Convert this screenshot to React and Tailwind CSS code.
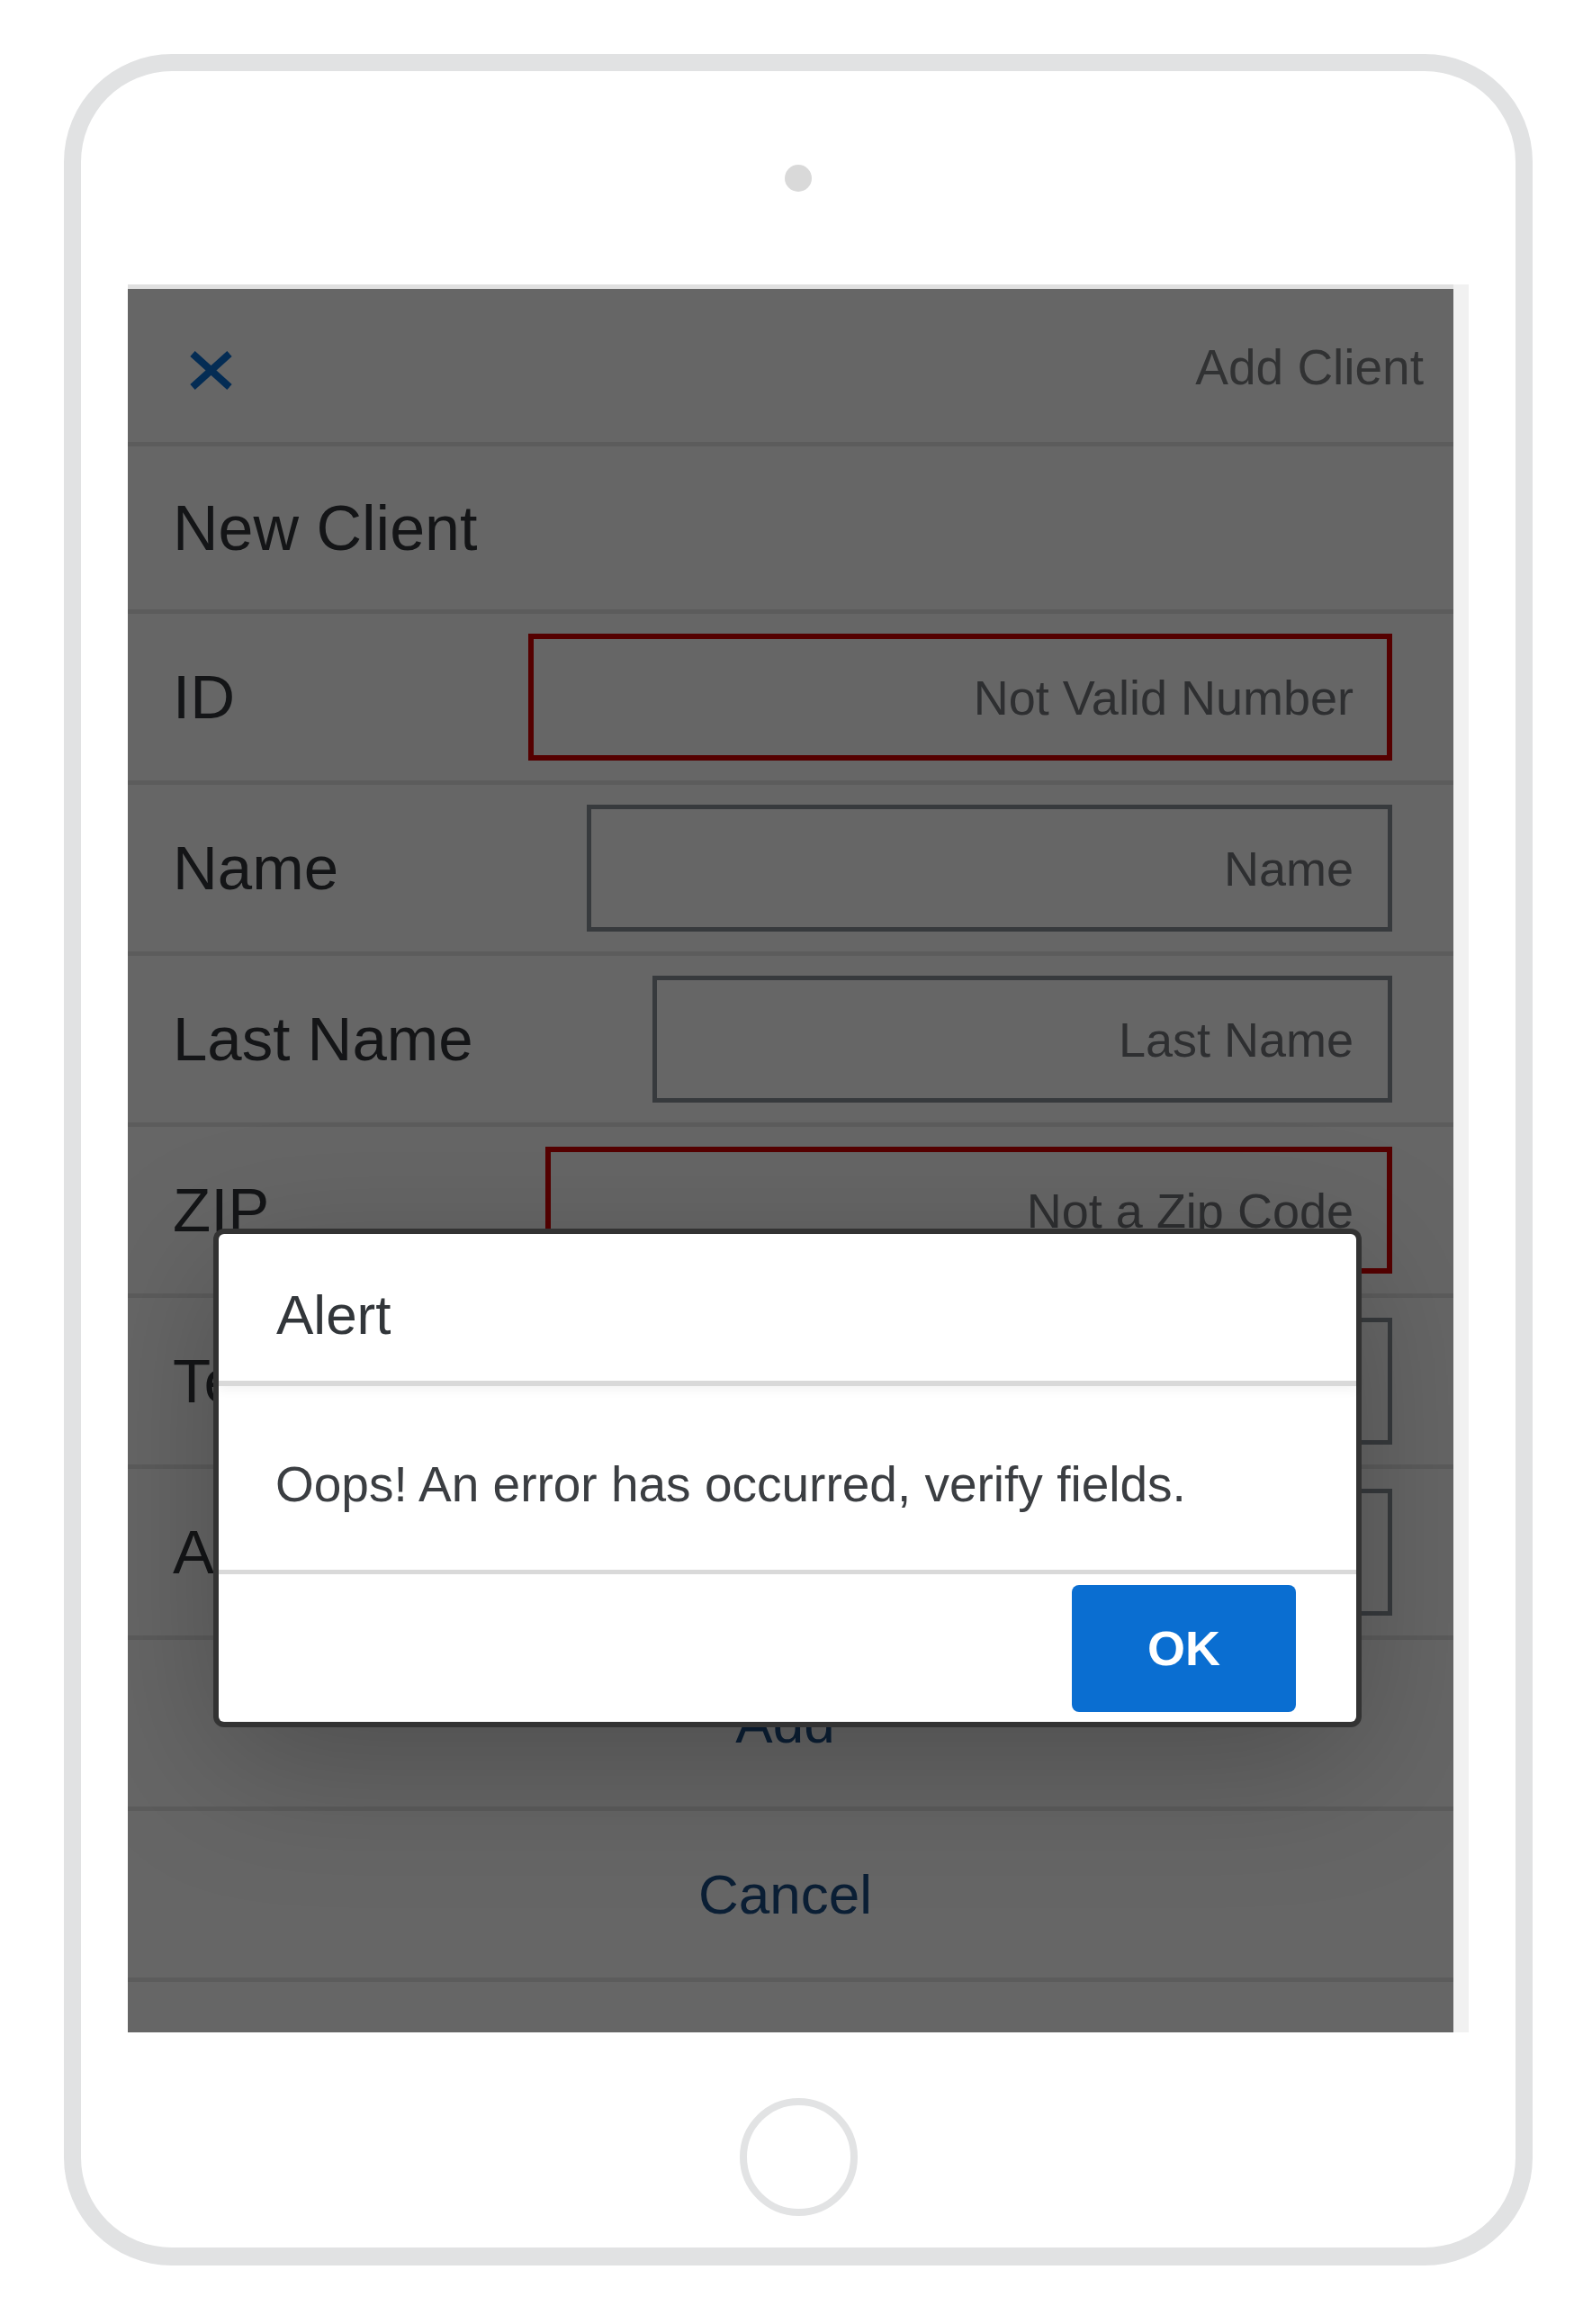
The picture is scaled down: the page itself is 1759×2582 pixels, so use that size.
import React from "react";

// Underlying page is drawn in its normal colours; a 60% black scrim sits over it,
// and the alert dialog sits over the scrim.

function FieldRow({ label, placeholder, widthClass, error }) {
  return (
    <div className="flex h-[190px] shrink-0 items-center justify-between border-b-[5px] border-[#e5e5e5] pl-[50px] pr-[68px]">
      <span className="text-[69px] leading-none text-[#32363a]">{label}</span>
      <div
        className={
          error
            ? `flex h-[141px] items-center justify-end border-[6px] border-[#d50000] pr-[37px] ${widthClass}`
            : `flex h-[141px] items-center justify-end border-[5px] border-[#89919a] pr-[38px] ${widthClass}`
        }
      >
        <span className="text-[54px] leading-none text-[#74777a]">{placeholder}</span>
      </div>
    </div>
  );
}

function ActionRow({ children }) {
  return (
    <div className="flex h-[190px] shrink-0 items-center justify-center border-b-[5px] border-[#e5e5e5] pr-[12px]">
      <span className="text-[62px] leading-none text-[#1d4f86]">{children}</span>
    </div>
  );
}

function AlertDialog() {
  return (
    <div className="absolute left-[101px] top-[1050px] flex w-[1264px] flex-col rounded-[6px] bg-white shadow-[0_0_0_6px_#333,0_40px_160px_rgba(0,0,0,0.25)]">
      {/* Header */}
      <div className="relative z-10 flex h-[169px] items-center border-b-[6px] border-[#d9d9d9] pl-[64px] pt-[17px] shadow-[0_6px_10px_rgba(0,0,0,0.04)]">
        <span className="text-[62px] leading-none text-[#32363a]">Alert</span>
      </div>

      {/* Message */}
      <div className="flex h-[209px] items-center border-b-[5px] border-[#d9d9d9] pl-[63px] pt-[15px]">
        <span className="text-[55px] leading-none text-[#3b3e42]">
          Oops! An error has occurred, verify fields.
        </span>
      </div>

      {/* Footer */}
      <div className="flex h-[164px] items-center justify-end pr-[67px]">
        <button className="flex h-[141px] w-[249px] items-center justify-center rounded-[8px] bg-[#0a6ed1] text-[54px] font-bold leading-none text-white">
          OK
        </button>
      </div>
    </div>
  );
}

export default function App() {
  return (
    <div className="min-h-[2582px] w-full bg-white pl-[71px] pt-[60px] font-['Liberation_Sans',Arial,sans-serif]">
      {/* Tablet frame */}
      <div className="flex h-[2457px] w-[1632px] flex-col items-center rounded-[120px] border-[19px] border-b-[20px] border-[#e1e2e3] bg-white pt-[104px]">
        {/* Camera */}
        <div className="h-[30px] w-[30px] shrink-0 rounded-full bg-[#d9d9d9]" />

        {/* Screen */}
        <div className="mx-[52px] mt-[103px] flex h-[1942px] shrink-0 self-stretch">
          <div className="flex flex-1 flex-col">
            <div className="h-[5px] shrink-0 bg-[#e0e0e0]" />
            <div className="relative flex flex-1 flex-col overflow-hidden bg-white">
              {/* Header bar */}
              <div className="flex h-[175px] shrink-0 items-center justify-between border-b-[5px] border-[#e5e5e5] pl-[67px] pr-[33px] pt-[5px]">
                <svg width="51" height="45" viewBox="0 0 51 45" className="mt-[6px]">
                  <path
                    d="M5 4 L46 41 M46 4 L5 41"
                    stroke="#0a6ed1"
                    strokeWidth="8"
                    fill="none"
                  />
                </svg>
                <span className="text-[55px] leading-none text-[#7a7d80]">Add Client</span>
              </div>

              {/* Title */}
              <div className="flex h-[186px] shrink-0 items-center border-b-[5px] border-[#e5e5e5] pl-[50px]">
                <span className="text-[70px] leading-none text-[#32363a]">New Client</span>
              </div>

              <FieldRow label="ID" placeholder="Not Valid Number" widthClass="w-[960px]" error />
              <FieldRow label="Name" placeholder="Name" widthClass="w-[895px]" />
              <FieldRow label="Last Name" placeholder="Last Name" widthClass="w-[822px]" />
              <FieldRow label="ZIP" placeholder="Not a Zip Code" widthClass="w-[941px]" error />
              <FieldRow label="Telephone" placeholder="Telephone" widthClass="w-[880px]" />
              <FieldRow label="Address" placeholder="Address" widthClass="w-[900px]" />

              <ActionRow>Add</ActionRow>
              <ActionRow>Cancel</ActionRow>
              <div className="flex-1" />

              {/* Scrim */}
              <div className="absolute inset-0 bg-[rgba(0,0,0,0.6)]" />

              <AlertDialog />
            </div>
          </div>
          <div className="w-[17px] shrink-0 bg-[#f1f1f1]" />
        </div>

        {/* Home button */}
        <div className="mt-[73px] h-[131px] w-[131px] shrink-0 rounded-full border-[8px] border-[#e2e3e4]" />
      </div>
    </div>
  );
}
